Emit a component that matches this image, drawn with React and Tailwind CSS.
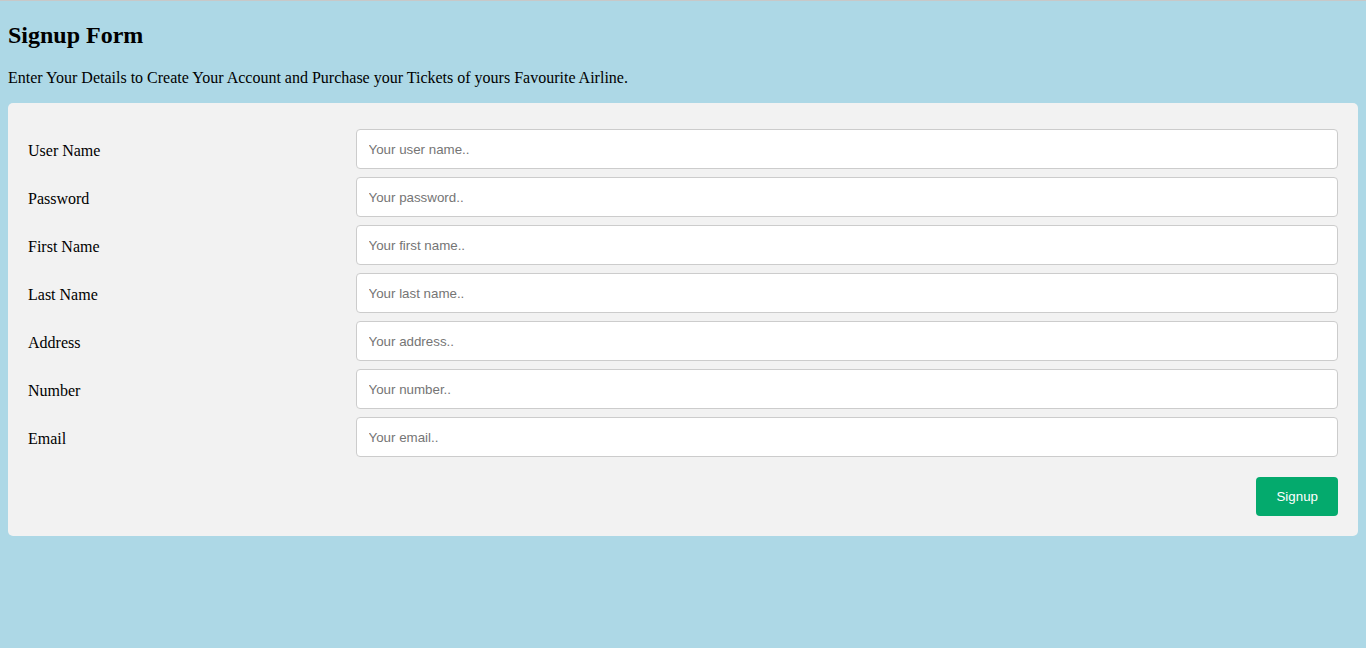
import React from "react";

const fields = [
  { label: "User Name", placeholder: "Your user name.." },
  { label: "Password", placeholder: "Your password.." },
  { label: "First Name", placeholder: "Your first name.." },
  { label: "Last Name", placeholder: "Your last name.." },
  { label: "Address", placeholder: "Your address.." },
  { label: "Number", placeholder: "Your number.." },
  { label: "Email", placeholder: "Your email.." },
];

const App = () => {
  return (
    <div className="min-h-screen bg-[#add8e6] border-t border-[#c8c8c8] px-2 pt-[20px] pb-8 font-['Liberation_Serif',_'Times_New_Roman',_serif] text-black">
      {/* Heading */}
      <h2 className="text-[24px] font-bold leading-[28px]">Signup Form</h2>
      <p className="mt-[20px] text-[16px] leading-[18px]">
        Enter Your Details to Create Your Account and Purchase your Tickets of yours Favourite Airline.
      </p>

      {/* Form card */}
      <div className="mt-[16px] bg-[#f2f2f2] rounded-[5px] px-5 pt-5 pb-5">
        {fields.map((f) => (
          <div key={f.label} className="flex h-12">
            <div className="w-1/4 pt-[19px] text-[16px] leading-[18px]">
              <label>{f.label}</label>
            </div>
            <div className="w-3/4 pt-[6px]">
              <input
                type="text"
                placeholder={f.placeholder}
                className="w-full h-10 px-3 bg-white border border-[#ccc] rounded-[4px] text-[13.33px] font-['Liberation_Sans',_Arial,_sans-serif] placeholder:text-[#757575] outline-none"
              />
            </div>
          </div>
        ))}

        <div className="flex justify-end mt-[18px]">
          <button
            type="button"
            className="h-[39px] px-5 bg-[#04aa6d] text-white rounded-[4px] text-[13.33px] font-['Liberation_Sans',_Arial,_sans-serif]"
          >
            Signup
          </button>
        </div>
      </div>
    </div>
  );
};

export default App;
